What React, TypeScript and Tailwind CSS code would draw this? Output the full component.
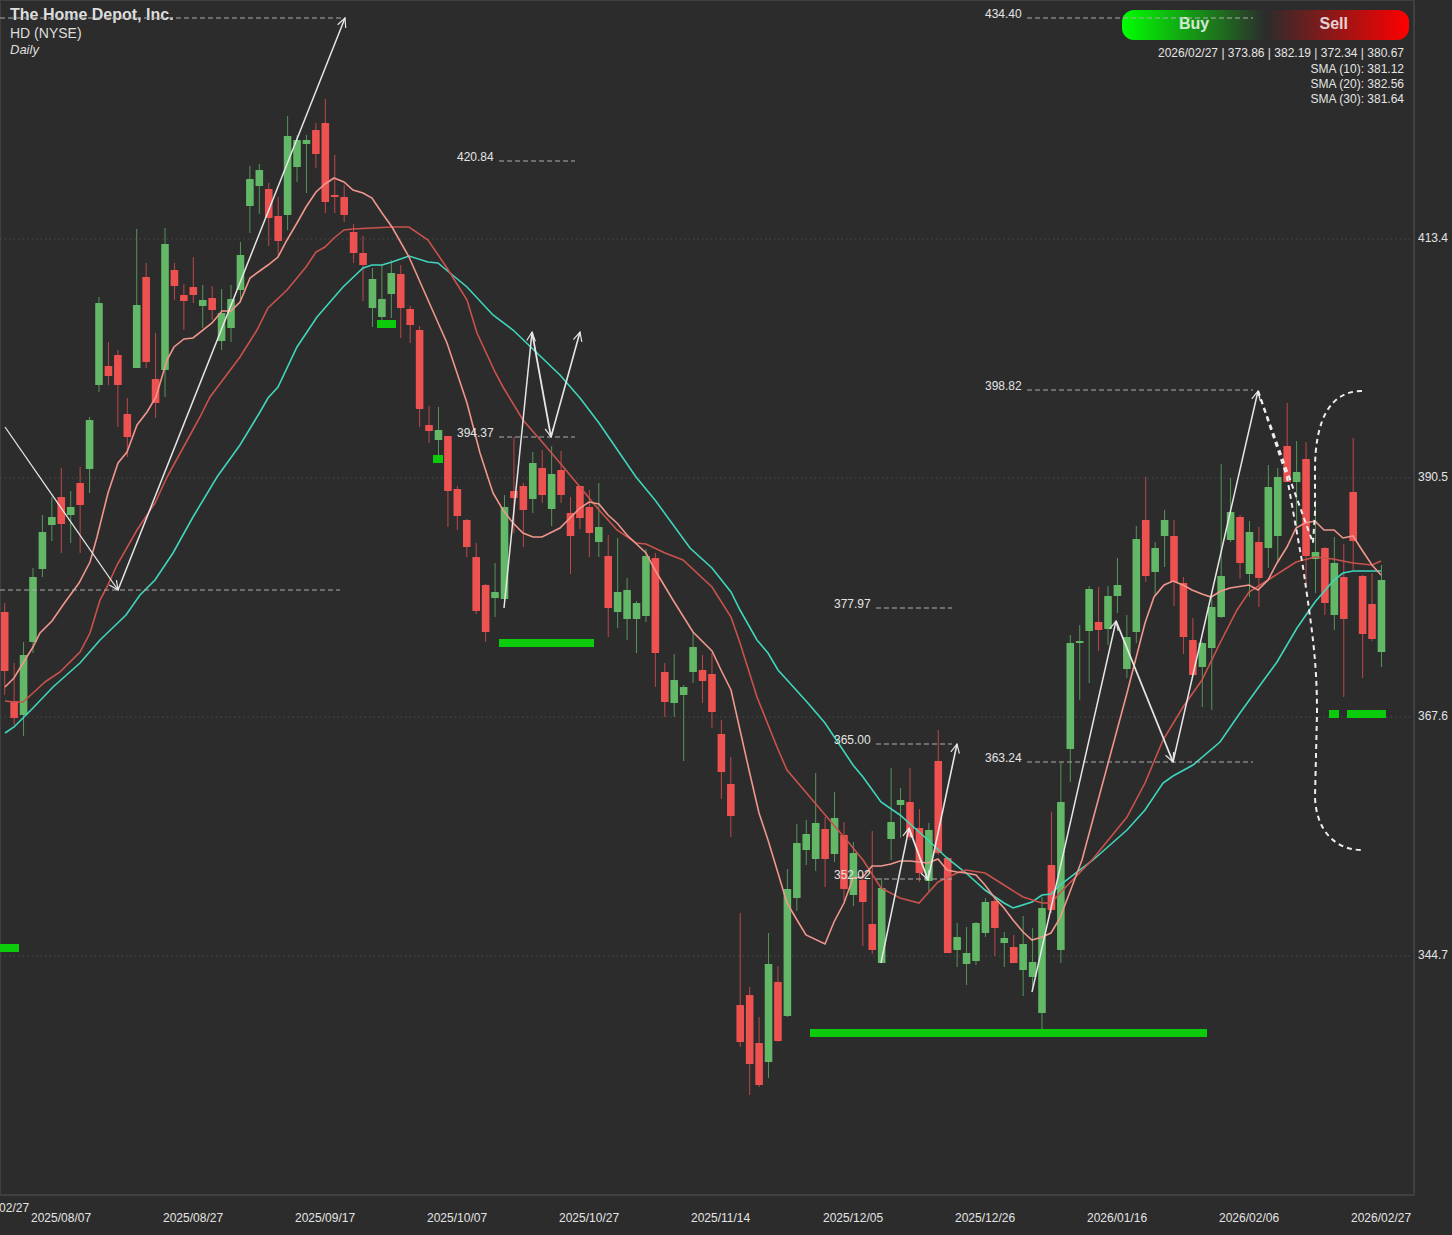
// HD daily candles, page pixels: [high, body top, body bottom, low, up=1/down=0]
const candles: number[][] = [
  [603,612,671,695,0],[663,701,718,725,0],[642,655,715,736,1],[568,577,642,653,1],[515,532,569,577,1],
  [497,517,525,541,1],[468,497,524,553,0],[491,507,515,543,1],[467,483,505,553,0],[417,420,469,493,1],
  [297,303,385,392,1],[342,366,376,385,0],[350,355,385,427,0],[398,414,437,457,0],[229,305,368,368,1],
  [263,277,362,368,0],[333,379,403,418,0],[228,244,370,397,1],[263,270,286,300,0],[284,295,301,330,0],
  [257,287,295,303,0],[285,300,306,328,1],[286,298,310,320,0],[289,313,341,350,1],[285,299,328,342,1],
  [242,255,290,300,1],[166,179,206,233,1],[164,170,186,214,1],[183,189,218,246,0],[197,216,241,256,0],
  [116,136,215,230,1],[135,140,167,182,1],[135,140,144,193,1],[123,130,154,168,0],[99,123,202,213,0],
  [155,195,197,213,0],[185,197,215,222,0],[224,232,253,263,0],[236,253,265,301,0],[268,279,308,327,1],
  [265,299,317,320,1],[260,273,294,318,1],[265,274,308,338,0],[306,309,325,343,0],[326,330,409,427,0],
  [406,425,431,443,0],[407,430,440,455,1],[436,436,491,527,0],[486,489,516,530,0],[519,520,547,557,0],
  [543,557,611,614,0],[584,585,632,642,0],[563,592,598,617,1],[495,507,599,600,1],[437,491,498,533,0],
  [483,486,510,547,0],[452,463,499,513,1],[450,468,495,503,0],[446,474,509,526,1],[451,470,495,503,0],
  [497,513,536,574,0],[486,486,518,529,0],[490,507,533,557,0],[483,527,542,557,1],[535,556,608,637,0],
  [538,592,612,628,1],[578,590,619,640,1],[601,603,619,653,1],[549,556,616,622,1],[553,558,653,687,0],
  [663,672,702,717,0],[654,680,703,717,1],[685,687,695,761,1],[632,647,672,683,1],[655,670,681,703,0],
  [653,674,712,728,0],[720,734,772,799,0],[757,784,816,837,0],[913,1005,1042,1047,0],[987,995,1064,1095,0],
  [1017,1043,1085,1087,0],[933,964,1062,1078,1],[966,982,1041,1042,0],[869,889,1016,1017,1],[824,843,898,911,1],
  [820,834,850,865,1],[773,823,859,871,1],[817,829,859,887,0],[792,818,854,862,1],[822,835,889,901,0],
  [842,853,895,906,1],[872,880,902,946,0],[831,924,950,954,0],[878,888,963,963,1],[768,822,839,860,1],
  [788,800,805,838,1],[768,802,837,840,0],[809,828,873,882,0],[823,830,881,891,1],[730,761,853,855,0],
  [857,858,953,953,0],[923,937,950,967,1],[927,953,964,985,1],[922,923,961,965,1],[898,902,933,937,1],
  [898,901,928,956,0],[932,938,943,967,1],[935,947,963,963,0],[916,944,970,996,1],[928,962,977,987,1],
  [897,908,1013,1029,1],[812,865,910,913,0],[763,802,950,963,1],[635,643,749,782,1],[625,641,643,700,1],
  [586,589,631,683,1],[587,622,630,651,0],[586,596,629,645,1],[558,585,596,613,1],[615,637,669,678,1],
  [526,539,632,643,1],[477,520,576,582,0],[542,548,572,596,1],[510,520,536,567,1],[520,536,582,606,0],
  [577,583,637,654,0],[618,640,675,675,0],[642,643,667,707,1],[595,607,648,710,1],[464,576,617,618,1],
  [478,512,540,542,1],[515,517,563,579,0],[521,532,574,597,1],[527,542,578,607,0],[465,487,548,568,1],
  [468,477,536,563,1],[403,446,482,482,0],[441,472,482,530,1],[442,459,556,587,0],[500,552,559,593,1],
  [547,548,603,615,0],[537,563,615,630,1],[544,577,619,697,0],[438,492,541,570,0],[575,576,634,678,0],
  [573,604,639,641,0],[565,580,652,667,1],
]

const sma10 = "5,687 14,678 23,663 33,647 40,633 52,621 63,605 79,583 90,562 97,537 108,493 118,463 127,452 137,425 147,412 156,397 167,360 174,347 184,339 193,338 212,323 222,311 231,311 240,302 250,278 268,265 278,257 287,240 297,223 306,207 316,192 325,184 334,178 344,182 353,190 363,193 372,198 382,213 392,227 409,257 428,300 447,343 467,403 480,453 493,493 503,510 513,523 523,533 533,537 542,537 560,528 570,518 580,508 589,502 599,504 608,515 617,523 627,535 646,553 655,570 673,600 693,632 712,651 721,670 731,690 740,730 749,770 759,813 768,840 778,873 787,903 797,920 806,935 825,944 834,922 844,903 853,878 863,877 872,866 881,866 891,864 900,861 910,861 919,862 928,863 938,859 947,870 957,872 966,873 976,875 985,885 994,897 1004,908 1013,920 1023,932 1032,940 1042,937 1051,933 1060,918 1082,860 1127,693 1145,623 1154,597 1164,585 1173,581 1183,585 1192,590 1202,594 1211,597 1221,591 1230,588 1249,585 1258,590 1268,580 1277,563 1287,547 1296,528 1305,523 1315,521 1324,530 1334,530 1343,538 1353,536 1362,550 1372,565 1381,575"
const sma20 = "5,701 14,702 23,702 33,693 45,682 60,672 80,652 90,633 100,600 107,587 117,565 137,530 155,503 167,477 183,448 200,417 210,397 240,357 257,330 268,308 287,290 306,267 316,252 325,247 334,238 344,230 353,229 372,228 392,227 409,227 428,240 447,268 467,300 477,333 495,372 503,387 523,420 543,443 560,463 580,487 599,510 617,530 636,543 646,544 665,553 683,560 712,587 731,617 740,643 757,697 777,747 787,770 815,803 844,837 863,860 881,888 900,898 919,903 928,893 938,882 957,873 966,870 985,873 1004,885 1023,897 1042,903 1051,903 1060,893 1092,860 1127,817 1145,783 1163,740 1183,707 1202,680 1220,643 1237,610 1249,592 1268,580 1296,562 1315,557 1333,559 1353,563 1372,565 1381,561"
const sma30 = "5,733 14,727 23,718 33,708 53,687 80,663 100,640 126,615 140,595 155,580 173,553 193,517 217,477 240,445 260,412 268,398 278,387 297,347 317,317 343,287 363,268 372,265 382,265 392,262 409,256 428,262 438,263 450,273 467,287 493,315 513,330 537,353 560,375 580,398 599,423 636,477 655,500 690,548 712,568 731,592 740,610 757,640 768,653 778,670 807,702 825,723 853,765 863,777 881,802 900,815 928,840 947,858 966,873 985,890 1004,903 1013,908 1032,902 1042,895 1051,894 1060,885 1093,860 1127,830 1145,810 1163,783 1173,776 1193,765 1220,742 1240,713 1258,688 1277,662 1297,628 1315,602 1334,580 1343,573 1353,571 1372,571 1381,571"

const dashes = [
  [0,18,345,18],[0,590,340,590],[499,161,575,161],[499,437,575,437],[876,608,952,608],[876,744,952,744],
  [876,879,952,879],[1027,18,1253,18],[1027,390,1253,390],[1027,762,1253,762],
]

// start, end, width
const arrows = [
  [5,427,118,590,1.3],[118,590,345,18,1.5],[504,608,532,332,1.5],[532,332,551,437,1.8],[551,437,580,332,1.6],
  [881,963,909,828,1.5],[909,828,928,880,1.8],[928,880,957,744,1.6],[1032,992,1116,621,1.5],[1116,621,1173,762,1.8],
  [1173,762,1258,391,1.5],
]

const signals = [
  [0,944,19,8],[377,320,19,8],[433,455,10,8],[499,639,95,8],[810,1029,397,8],[1329,710,10,8],[1347,710,39,8],
]

const dates = ["2025/08/07","2025/08/27","2025/09/17","2025/10/07","2025/10/27","2025/11/14","2025/12/05","2025/12/26","2026/01/16","2026/02/06","2026/02/27"]
const axis = ["413.4","390.5","367.6","344.7"]

function Arrow({ a }: { a: number[] }) {
  const [x1, y1, x2, y2, w] = a
  const t = Math.atan2(y2 - y1, x2 - x1)
  const head = (d: number) => `${x2 - 10 * Math.cos(t + d)},${y2 - 10 * Math.sin(t + d)}`
  return (
    <g stroke="#e6e6e6" fill="none" strokeWidth={w}>
      <line x1={x1} y1={y1} x2={x2} y2={y2} />
      <polyline points={`${head(0.45)} ${x2},${y2} ${head(-0.45)}`} strokeWidth={1.2} />
    </g>
  )
}

function Chart() {
  return (
    <svg className="absolute left-0 top-0" width={1415} height={1195} viewBox="0 0 1415 1195">
      {[239, 478, 717, 956].map((y) => (
        <line key={y} x1={0} x2={1413} y1={y} y2={y} stroke="#4a4a4a" strokeDasharray="1.5 3" />
      ))}
      {signals.map((s, i) => (
        <rect key={i} x={s[0]} y={s[1]} width={s[2]} height={s[3]} fill="#0bcb0b" />
      ))}
      {candles.map((c, i) => {
        const x = 4.7 + 9.43 * i
        const color = c[4] ? "#62b866" : "#ee5250"
        return (
          <g key={i} fill={color}>
            <rect x={x - 0.5} y={c[0]} width={1} height={c[3] - c[0]} opacity={0.75} />
            <rect x={x - 3.8} y={c[1]} width={7.6} height={Math.max(c[2] - c[1], 1)} rx={0.6} />
          </g>
        )
      })}
      <polyline points={sma30} fill="none" stroke="#3fd6bd" strokeWidth={1.6} />
      <polyline points={sma20} fill="none" stroke="#c9524c" strokeWidth={1.6} />
      <polyline points={sma10} fill="none" stroke="#f0968c" strokeWidth={1.6} />
      {dashes.map((d, i) => (
        <line key={i} x1={d[0]} y1={d[1]} x2={d[2]} y2={d[3]} stroke="#ababab" strokeWidth={1.2} strokeDasharray="5 3" />
      ))}
      {arrows.map((a, i) => (
        <Arrow key={i} a={a} />
      ))}
      <g fill="none" stroke="#eeeeee" strokeWidth={2} strokeDasharray="5 4">
        <path d="M1362 391C1330 391 1315 420 1315 470L1315 513L1313 543L1258 391" />
        <path d="M1258 391L1287 477L1303 567C1312 630 1317 660 1317 713L1315 797C1316 830 1335 850 1362 850" />
      </g>
    </svg>
  )
}

export default function App() {
  return (
    <div className="relative flex h-[1235px] w-[1452px] flex-col overflow-hidden bg-[#2c2c2c] font-['Liberation_Sans',Arial,sans-serif] text-[12px] leading-[15px] text-[#e4e4e4]">
      <div className="flex h-[1196px]">
        <div className="flex w-[1415px] items-start justify-between border-t border-r-2 border-b-2 border-l border-[#404040] pl-[9px] pr-[4px] pt-[5px]">
          <div className="text-[#dedede]">
            <div className="text-[16px] font-bold leading-[18px]">The Home Depot, Inc.</div>
            <div className="mt-px text-[14px] leading-[17px]">HD (NYSE)</div>
            <div className="text-[13px] italic leading-[16px]">Daily</div>
          </div>
          <div className="flex w-[287px] flex-col items-end pt-[4px]">
            <div className="flex h-[30px] w-full items-center justify-between rounded-[12px] bg-linear-to-r/srgb from-[#00ff00] via-[#2c2c2c] to-[#ff0000] pb-[4px] pl-[57px] pr-[61px] text-[16px] font-bold text-white/80">
              <span>Buy</span>
              <span>Sell</span>
            </div>
            <div className="mt-[5px] pr-[5px] text-right">
              <div className="mb-px leading-[16px]">2026/02/27 | 373.86 | 382.19 | 372.34 | 380.67</div>
              <div>SMA (10): 381.12</div>
              <div>SMA (20): 382.56</div>
              <div>SMA (30): 381.64</div>
            </div>
          </div>
        </div>
        <div className="flex flex-col gap-[224px] pl-[3px] pt-[231px]">
          {axis.map((v) => (
            <span key={v}>{v}</span>
          ))}
        </div>
      </div>

      <div className="flex pl-[31px] pt-[15px]">
        {dates.map((d) => (
          <span key={d} className="w-[132px] shrink-0">{d}</span>
        ))}
      </div>

      <Chart />

      <span className="absolute left-[-31px] top-[1201px]">2026/02/27</span>
      <span className="absolute left-[985px] top-[7px]">434.40</span>
      <span className="absolute left-[457px] top-[150px]">420.84</span>
      <span className="absolute left-[985px] top-[379px]">398.82</span>
      <span className="absolute left-[457px] top-[426px]">394.37</span>
      <span className="absolute left-[834px] top-[597px]">377.97</span>
      <span className="absolute left-[834px] top-[733px]">365.00</span>
      <span className="absolute left-[985px] top-[751px]">363.24</span>
      <span className="absolute left-[834px] top-[868px]">352.02</span>
    </div>
  )
}
